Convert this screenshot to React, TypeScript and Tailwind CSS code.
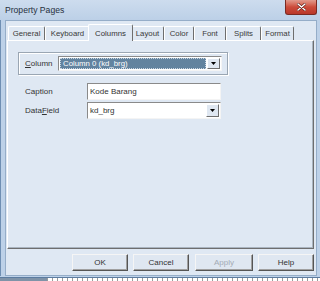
import { ReactNode } from "react";

const TABS = [
  { label: "General", w: 37 },
  { label: "Keyboard", w: 45 },
  { label: "Columns", w: 41, active: true },
  { label: "Layout", w: 33 },
  { label: "Color", w: 30 },
  { label: "Font", w: 32 },
  { label: "Splits", w: 35 },
  { label: "Format", w: 33 },
];

function DropButton() {
  return (
    <div className="flex h-full w-[13px] shrink-0 items-center justify-center border border-t-white border-l-white border-r-[#6e6e6e] border-b-[#6e6e6e] bg-[#dfe7f1]">
      <svg width="5" height="3" viewBox="0 0 5 3">
        <path d="M0 0h5L2.5 3z" fill="#000" />
      </svg>
    </div>
  );
}

function Field({ children, combo }: { children: ReactNode; combo?: boolean }) {
  return (
    <div className="flex h-[17px] w-[134px] items-stretch border border-t-[#8a8a8a] border-l-[#8a8a8a] border-r-[#f4f4f4] border-b-[#f4f4f4] bg-white">
      <div className="flex min-w-0 flex-1 items-center pl-[2px] text-[8px] text-[#333]">{children}</div>
      {combo && (
        <div className="p-px">
          <DropButton />
        </div>
      )}
    </div>
  );
}

function Btn({ label, w, disabled }: { label: string; w: number; disabled?: boolean }) {
  return (
    <div
      style={{ width: w }}
      className={`flex h-[17px] items-center justify-center border border-t-[#f5f5f5] border-l-[#f5f5f5] border-r-[#555] border-b-[#555] bg-[#dfe7f1] text-[8px] shadow-[inset_-1px_-1px_0_#a0a0a0] ${
        disabled ? "text-[#a3abb5]" : "text-[#333]"
      }`}
    >
      {label}
    </div>
  );
}

export default function App() {
  return (
    <div className="flex h-[281px] w-[320px] flex-col bg-[#bdd1e8] font-['Liberation_Sans',Arial,sans-serif]">
      {/* title bar */}
      <div className="flex h-[20px] shrink-0 items-start justify-between bg-gradient-to-b from-[#cddcee] to-[#bcd0e7] pl-[5px] pr-[3px]">
        <span className="pt-[4px] text-[8.6px] leading-[12px] text-[#26303d]">Property Pages</span>
        <div className="flex h-[15px] w-[32px] items-center justify-center rounded-b-[3px] border border-t-0 border-[#7a2a22] bg-gradient-to-b from-[#e19a8c] via-[#cc4b3a] to-[#b9382a]">
          <svg width="9" height="8" viewBox="0 0 9 8">
            <path d="M1 1l7 6M8 1L1 7" stroke="#5a1a12" strokeWidth="2.6" strokeLinecap="round" />
            <path d="M1 1l7 6M8 1L1 7" stroke="#fff" strokeWidth="1.5" strokeLinecap="round" />
          </svg>
        </div>
      </div>

      {/* body with side frames */}
      <div className="flex min-h-0 flex-1 border-l border-[#6f8fb3] pl-[4px] pr-[3px]">
        <div className="flex flex-1 flex-col border border-[#95adc8] bg-[#dfe8f3]">
          {/* tabs */}
          <div className="flex h-[19px] shrink-0 items-end pl-[2px]">
            {TABS.map((t) =>
              t.active ? (
                <div
                  key={t.label}
                  style={{ width: t.w + 4 }}
                  className="relative z-10 -mx-[2px] -mb-px flex h-[17px] items-start justify-center rounded-t-[2px] border-l border-t border-r border-l-white border-t-white border-r-[#6e6e6e] bg-[#dfe8f3] pt-[3px] text-[7.8px] text-[#333]"
                >
                  {t.label}
                </div>
              ) : (
                <div
                  key={t.label}
                  style={{ width: t.w }}
                  className="flex h-[14px] items-center justify-center rounded-t-[2px] border-l border-t border-r border-l-white border-t-white border-r-[#6e6e6e] text-[7.8px] text-[#3a3a3a]"
                >
                  {t.label}
                </div>
              ),
            )}
          </div>

          {/* panel */}
          <div className="ml-[1px] mr-[2px] flex h-[209px] shrink-0 flex-col border border-t-white border-l-white border-r-[#6e6e6e] border-b-[#6e6e6e] shadow-[inset_-1px_-1px_0_#a9b4c0]">
            {/* group */}
            <div className="ml-[10px] mt-[11px] flex h-[23px] w-[210px] items-center border border-[#9aa6b3] pl-[6px] pr-[5px] shadow-[inset_1px_1px_0_#fff,1px_1px_0_#fff]">
              <span className="w-[33px] text-[8px] text-[#333]">
                <span className="underline">C</span>olumn
              </span>
              <div className="flex h-[15px] w-[164px] items-stretch border border-t-[#8a8a8a] border-l-[#8a8a8a] border-r-[#f4f4f4] border-b-[#f4f4f4] bg-white">
                <div className="m-px flex flex-1 items-center border border-dotted border-[#c8d4e0] bg-[#62839f] pl-[2px] text-[7.8px] text-white">
                  Column 0 (kd_brg)
                </div>
                <div className="py-px pr-px">
                  <DropButton />
                </div>
              </div>
            </div>

            {/* caption */}
            <div className="ml-[17px] mt-[8px] flex items-center">
              <span className="w-[62px] text-[8px] text-[#333]">Caption</span>
              <Field>Kode Barang</Field>
            </div>
            <div className="ml-[17px] mt-[2px] flex items-center">
              <span className="w-[62px] text-[8px] text-[#333]">
                Data<span className="underline">F</span>ield
              </span>
              <Field combo>kd_brg</Field>
            </div>
          </div>

          {/* buttons */}
          <div className="mr-[2px] mt-[5px] flex justify-end">
            <Btn label="OK" w={56} />
            <div className="w-[5px]" />
            <Btn label="Cancel" w={56} />
            <div className="w-[6px]" />
            <Btn label="Apply" w={58} disabled />
            <div className="w-[5px]" />
            <Btn label="Help" w={56} />
          </div>
        </div>
      </div>

      {/* bottom frame and strip */}
      <div className="h-[2px] shrink-0 border-b border-[#5c7ca0] bg-[#bdd1e8]" />
      <div className="flex h-[3px] shrink-0">
        <div className="w-[47px] bg-[#7f93a8]" />
        <div className="flex-1 bg-white bg-[repeating-linear-gradient(90deg,#9a9a9a_0_1px,transparent_1px_5px)]" />
      </div>
    </div>
  );
}
